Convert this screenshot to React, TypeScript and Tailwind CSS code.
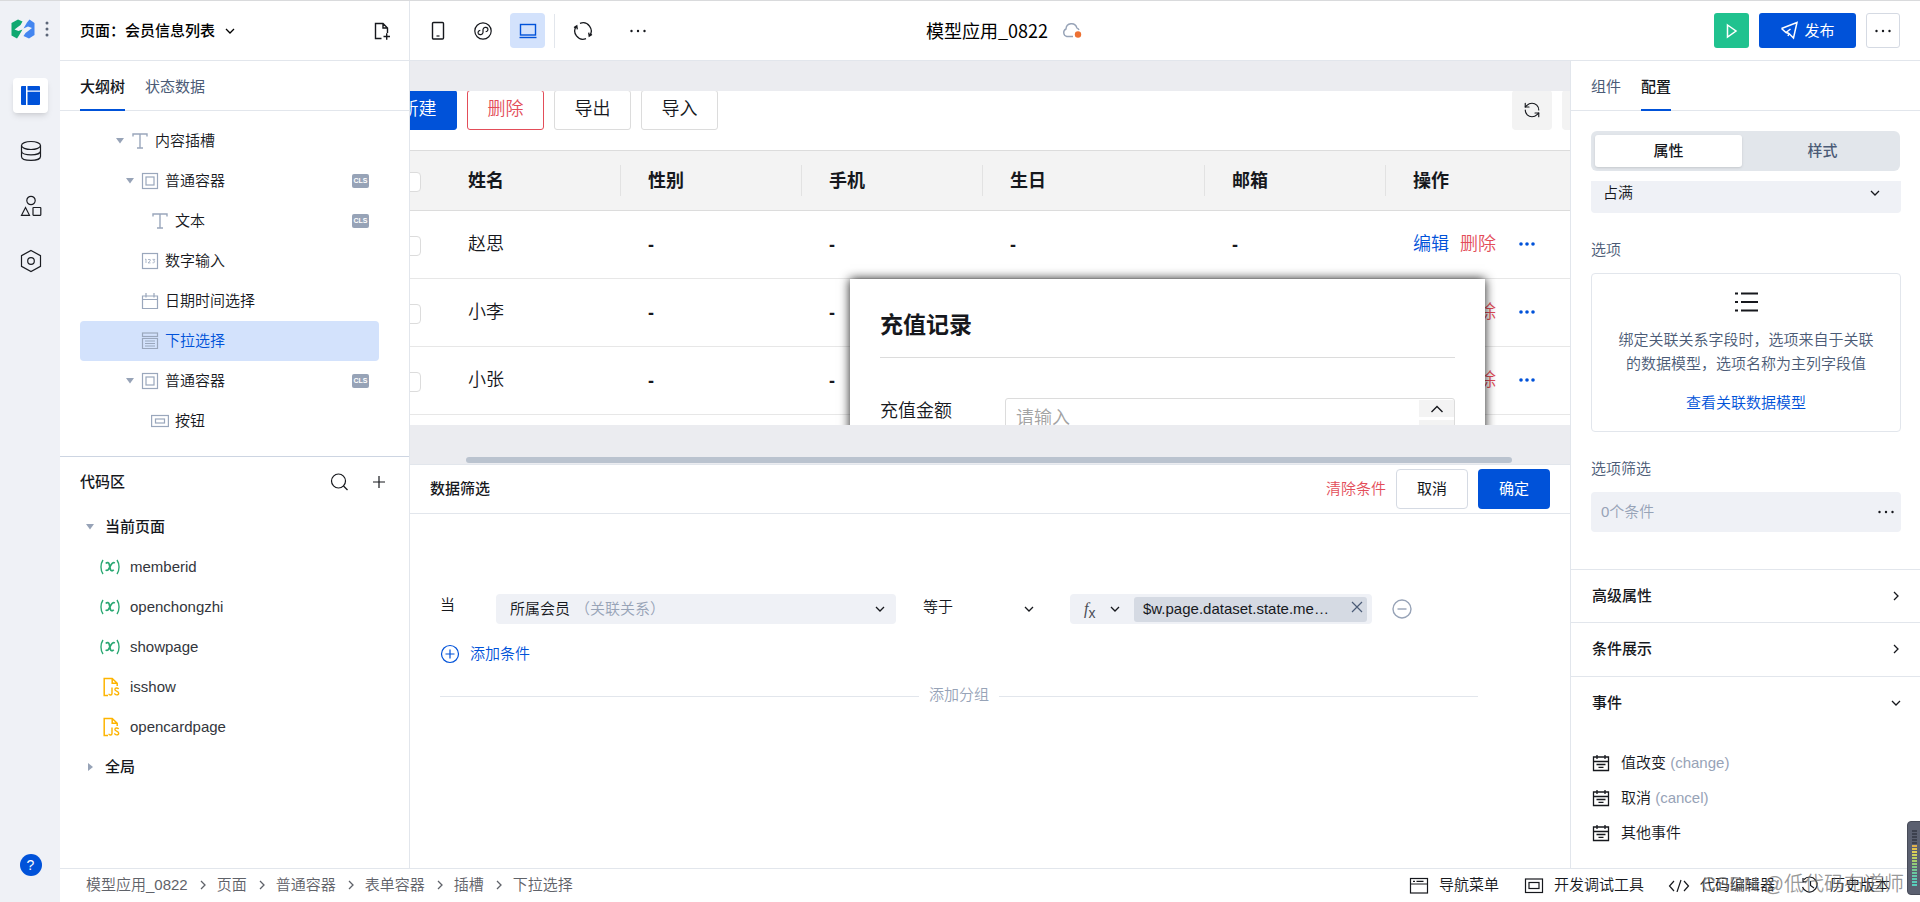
import { useState } from 'react';
import type { ReactNode } from 'react';
import { RefreshCcw } from 'lucide-react';
import clsx from 'clsx';

interface IconProps {
  className?: string;
}

interface SvgProps extends IconProps {
  w: number;
  h: number;
  children: ReactNode;
}

function Svg({ w, h, className, children }: SvgProps) {
  return (
    <svg
      width={w}
      height={h}
      viewBox={`0 0 ${w} ${h}`}
      fill="none"
      stroke="currentColor"
      strokeWidth={1.2}
      className={clsx('shrink-0', className)}
      aria-hidden="true"
    >
      {children}
    </svg>
  );
}

const ChevronDown = ({ className }: IconProps) => (
  <Svg w={10} h={10} className={className}>
    <path d="M1 3l4 4 4-4" strokeWidth={1.3} />
  </Svg>
);

const ChevronRight = ({ className }: IconProps) => (
  <Svg w={10} h={10} className={className}>
    <path d="M3 1l4 4-4 4" strokeWidth={1.3} />
  </Svg>
);

const Dots = ({ className }: IconProps) => (
  <Svg w={18} h={4} className={className}>
    <g fill="currentColor" stroke="none">
      <circle cx="2.5" cy="2" r="1.2" />
      <circle cx="9" cy="2" r="1.2" />
      <circle cx="15.5" cy="2" r="1.2" />
    </g>
  </Svg>
);

const Caret = ({ open = true }: { open?: boolean }) => (
  <Svg w={12} h={12} className="text-[#97a3b7]">
    <path d={open ? 'M2 3h8L6 8.5z' : 'M4 2v8l5-4z'} fill="currentColor" stroke="none" />
  </Svg>
);

const TextIcon = () => (
  <Svg w={18} h={18}>
    <path d="M2 4.5V2h14v2.5M9 2v14M6 16h6" strokeWidth={1.4} />
  </Svg>
);

const ContainerIcon = () => (
  <Svg w={18} h={18}>
    <rect x="1.5" y="1.5" width="15" height="15" />
    <rect x="5" y="5" width="8" height="8" />
  </Svg>
);

const NumberIcon = () => (
  <Svg w={18} h={18}>
    <rect x="1.5" y="1.5" width="15" height="15" />
    <path d="M4 7.5l1-.5v4M7 7.5h2.2V9L7 10.9h2.5M11.5 7.4h2.3L12.6 9c1.6 0 1.6 2-1.1 1.8" strokeWidth={0.8} />
  </Svg>
);

const CalendarIcon = () => (
  <Svg w={18} h={18}>
    <path d="M1.5 4h15v12.5h-15zM1.5 7.5h15M5 1v4.5M13 1v4.5" />
  </Svg>
);

const SelectIcon = () => (
  <Svg w={18} h={18}>
    <rect x="1.5" y="1" width="15" height="3.5" />
    <path d="M1.5 6.5h15v10h-15zM4 9h10M4 11.5h10M4 14h10" />
  </Svg>
);

const ButtonIcon = () => (
  <Svg w={18} h={18}>
    <rect x="0.6" y="3.5" width="16.8" height="11" />
    <rect x="4.5" y="7" width="9" height="4" />
  </Svg>
);

const EventIcon = () => (
  <Svg w={18} h={18}>
    <path d="M1.5 3h15v13.5h-15zM1.5 7.5h15M5 1v4M13 1v4M4.5 10.5h9M6.500 13.3h5" strokeWidth={1.3} />
  </Svg>
);

const JsFileIcon = () => (
  <Svg w={18} h={20} className="text-[#fdb400]">
    <path d="M6 18.5H2.2V1.5h8l5 4.7V9M10.2 1.5v4.7h5" strokeWidth={1.5} />
    <path d="M10 10.5v6c0 2-3 2-3 .2M16.500 12.2c-.2-1.7-3.6-1.6-3.6.2 0 2 3.8 1.3 3.8 3.8 0 2.2-3.9 2.2-4.1 0" strokeWidth={1.4} />
  </Svg>
);

const VarIcon = () => (
  <Svg w={20} h={16} className="text-[#2aa873]">
    <path d="M3 1C.3 5 .3 11 3 15M17 1c2.7 4 2.7 10 0 14" strokeWidth={1.4} />
    <path d="M5.800 4.500c1.400-1.700 3-1 3.400.8l1.200 5c.4 1.800 2 2 3.300.4M14.800 4c-1.700-1.200-3 .3-4.600 3.400s-2.400 4.700-4.600 3.700" strokeWidth={1.7} />
  </Svg>
);

interface TreeNode {
  label: string;
  icon: ReactNode;
  indent: string;
  caret?: boolean;
  cls?: boolean;
}

const treeNodes: TreeNode[] = [
  { label: '内容插槽', icon: <TextIcon />, indent: 'pl-[34px]', caret: true },
  { label: '普通容器', icon: <ContainerIcon />, indent: 'pl-[44px]', caret: true, cls: true },
  { label: '文本', icon: <TextIcon />, indent: 'pl-[54px]', cls: true },
  { label: '数字输入', icon: <NumberIcon />, indent: 'pl-[44px]' },
  { label: '日期时间选择', icon: <CalendarIcon />, indent: 'pl-[44px]' },
  { label: '下拉选择', icon: <SelectIcon />, indent: 'pl-[44px]' },
  { label: '普通容器', icon: <ContainerIcon />, indent: 'pl-[44px]', caret: true, cls: true },
  { label: '按钮', icon: <ButtonIcon />, indent: 'pl-[54px]' },
];

const codeItems = [
  { name: 'memberid', type: 'var' },
  { name: 'openchongzhi', type: 'var' },
  { name: 'showpage', type: 'var' },
  { name: 'isshow', type: 'js' },
  { name: 'opencardpage', type: 'js' },
];

const members = ['赵思', '小李', '小张', ''];
const crumbs = ['模型应用_0822', '页面', '普通容器', '表单容器', '插槽', '下拉选择'];
const events = [
  { label: '值改变', code: '(change)' },
  { label: '取消', code: '(cancel)' },
  { label: '其他事件', code: '' },
];

function Rail() {
  return (
    <nav className="flex w-[60px] shrink-0 flex-col items-center bg-[#eff1f6] pl-px text-[#1b1d22]">
      <div className="flex h-[60px] w-full items-center gap-[10px] pb-1 pl-[10px]">
        <svg width="24" height="20" viewBox="0 0 24 20" aria-hidden="true">
          <path d="M.5 4L7 .5 11.500 2.500 9.500 6 3.500 10.500 7.500 12l4-1.500L8 16.500 6 19.500.5 16.500z" fill="#0fa870" />
          <path d="M23.500 16L18 19.500 12.500 17l2-3 6.500-5-4-1.500-4.500 2L16 3.500l2.500-3 5 3.500z" fill="#4486f0" />
        </svg>
        <Svg w={4} h={16} className="text-[#5c6678]">
          <g fill="currentColor" stroke="none">
            <circle cx="2" cy="2" r="1.5" />
            <circle cx="2" cy="8" r="1.5" />
            <circle cx="2" cy="14" r="1.5" />
          </g>
        </Svg>
      </div>
      <button type="button" aria-label="页面" className="mt-[17px] flex size-[35px] items-center justify-center rounded bg-white shadow-md">
        <svg width="19" height="19" viewBox="0 0 19 19" fill="#0052d9" aria-hidden="true">
          <path d="M0 1a1 1 0 011-1h4v19H1a1 1 0 01-1-1zM6.500 0H18a1 1 0 011 1v3.500H6.500zM6.500 5.700H19V18a1 1 0 01-1 1H6.500z" />
        </svg>
      </button>
      <button type="button" aria-label="数据" className="mt-[27px]">
        <Svg w={22} h={22}>
          <ellipse cx="11" cy="5.500" rx="9.500" ry="4" />
          <path d="M1.500 5.500v11c0 5.200 19 5.200 19 0v-11M1.500 11c0 5.200 19 5.200 19 0" />
        </Svg>
      </button>
      <button type="button" aria-label="组件" className="mt-[33px]">
        <Svg w={22} h={22}>
          <circle cx="11" cy="5.500" r="4.200" />
          <path d="M5.500 12.500l4 7.800h-8z" />
          <rect x="13" y="12.500" width="7.800" height="7.800" rx="0.500" />
        </Svg>
      </button>
      <button type="button" aria-label="设置" className="mt-[32px]">
        <Svg w={22} h={24}>
          <path d="M11 1.500l9.500 5.200v10.600L11 22.500l-9.500-5.200V6.700z" />
          <circle cx="11" cy="12" r="3.300" />
        </Svg>
      </button>
      <button type="button" className="mt-auto mb-[26px] size-[22px] rounded-full bg-[#0052d9] text-sm leading-[22px] text-white">
        ?
      </button>
    </nav>
  );
}

function TopBar() {
  return (
    <header className="flex h-[60px] shrink-0 border-b border-[#e2e6ec]">
      <div className="flex flex-1">
        <div className="flex w-[350px] shrink-0 items-center border-r border-[#e2e6ec] pr-[18px] pl-5">
          <button type="button" className="flex items-center gap-[10px] font-medium text-black">
            页面：会员信息列表
            <ChevronDown />
          </button>
          <button type="button" aria-label="新建页面" className="ml-auto">
            <Svg w={18} h={20}>
              <path d="M8.500 17.500H2.500v-15h7.500l4.500 4.500v5M10 2.500V7h4.500M10.500 15.500h6.500M13.700 12.300v6.500" strokeWidth={1.400} />
            </Svg>
          </button>
        </div>
        <div className="flex items-center pl-[10px]">
          <button type="button" aria-label="手机" className="flex size-[35px] items-center justify-center">
            <Svg w={14} h={20}>
              <rect x="1.500" y="1.500" width="11" height="16.500" rx="1" strokeWidth={1.400} />
              <path d="M5.500 15h3" />
            </Svg>
          </button>
          <button type="button" aria-label="小程序" className="ml-[10px] flex size-[35px] items-center justify-center">
            <Svg w={20} h={20}>
              <circle cx="10" cy="10" r="8.200" />
              <path d="M7.300 9.300c-2 .3-2.600 2-2 3.300 1 1.800 4.500 1.300 4.700-1.100v-3c.2-2.400 3.700-2.900 4.700-1.100.6 1.300 0 3-2 3.300" />
            </Svg>
          </button>
          <button type="button" aria-label="电脑" className="ml-[10px] flex size-[35px] items-center justify-center rounded bg-[#d3e2fc] text-[#0052d9]">
            <Svg w={18} h={16}>
              <rect x="1.500" y="1.500" width="15" height="10.500" strokeWidth={1.400} />
              <path d="M0.500 14.500h17" strokeWidth={1.400} />
            </Svg>
          </button>
          <div className="ml-[9px] h-[34px] w-px bg-[#e2e6ec]" />
          <button type="button" aria-label="刷新" className="ml-[10px] flex size-[35px] items-center justify-center">
            <Svg w={20} h={20}>
              <path d="M7 2.400A8.200 8.200 0 0116.500 15M19 13.500l-2.800 1.700-.5-3.500" strokeWidth={1.300} />
              <path d="M13 17.600A8.200 8.200 0 013.500 5M1 6.500l2.800-1.700.5 3.500" strokeWidth={1.300} />
            </Svg>
          </button>
          <button type="button" aria-label="更多" className="ml-[20px] flex size-[35px] items-center justify-center">
            <Dots />
          </button>
        </div>
      </div>
      <h1 className="flex items-center gap-[14px] pb-[2px] pl-12 font-['Noto_Sans_CJK_SC',sans-serif] text-lg font-normal text-black">
        模型应用_0822
        <Svg w={20} h={18} className="text-[#97a3b7]">
          <path d="M11 15.500H4.800A4 4 0 014 8a5.500 5.500 0 0110.800-1.200c.8.300 1.700 1 2.200 2.200" strokeWidth={1.400} />
          <circle cx="16" cy="13.500" r="3.200" fill="#ed7133" stroke="none" />
        </Svg>
      </h1>
      <div className="flex flex-1 items-center justify-end gap-[10px] pr-5">
        <button type="button" aria-label="预览" className="flex size-[35px] items-center justify-center rounded-[3px] bg-[#20c28f] text-white">
          <Svg w={12} h={16}>
            <path d="M1.500 2l8.500 6-8.500 6z" strokeWidth={1.500} />
          </Svg>
        </button>
        <button type="button" className="flex h-[35px] w-[97px] items-center justify-center gap-[5px] rounded-[3px] bg-[#0052d9] font-normal text-white">
          <Svg w={19} h={19}>
            <path d="M1.500 7.500L17 1.500 13.500 17 9 12.500 8 15M1.500 7.500L6 11.500l3 1M6 11.500L10.500 8" strokeWidth={1.500} />
          </Svg>
          发布
        </button>
        <button type="button" aria-label="更多操作" className="flex h-[35px] w-[34px] items-center justify-center rounded-[3px] border border-[#d5dae3]">
          <Dots />
        </button>
      </div>
    </header>
  );
}

function Sidebar() {
  const [selected, setSelected] = useState(5);

  return (
    <aside className="flex w-[350px] shrink-0 flex-col border-r border-[#e2e6ec]">
      <div className="flex h-[50px] shrink-0 gap-5 border-b border-[#e2e6ec] pl-5 font-normal">
        <button type="button" className="relative pt-[2px] font-medium after:absolute after:inset-x-0 after:-bottom-px after:h-[2px] after:bg-[#0052d9]">
          大纲树
        </button>
        <button type="button" className="pt-[2px] text-[#4b5b76]">状态数据</button>
      </div>

      <div className="shrink-0 border-b border-[#cdd5e2] pt-[10px] pr-[30px] pb-[15px] pl-5">
        {treeNodes.map((node, i) => (
          <button
            type="button"
            key={i}
            onClick={() => setSelected(i)}
            className={clsx(
              'flex h-10 w-full items-center rounded pr-[10px]',
              node.indent,
              selected === i && 'bg-[#d3e2fc] text-[#0052d9]'
            )}
          >
            <span className="flex w-[12px] shrink-0">{node.caret && <Caret />}</span>
            <span className="mr-[6px] ml-[5px] text-[#9aa7bc]">{node.icon}</span>
            {node.label}
            {node.cls && (
              <span className="ml-auto h-[14px] w-[17px] rounded-[2px] bg-[#97a3b7] text-center text-[7px] leading-[14px] font-bold text-white">
                CLS
              </span>
            )}
          </button>
        ))}
      </div>

      <div className="flex h-[50px] shrink-0 items-center pr-[23px] pl-5">
        <h2 className="font-medium">代码区</h2>
        <button type="button" aria-label="搜索" className="mr-6 ml-auto">
          <Svg w={18} h={18}>
            <circle cx="8.500" cy="8" r="7" />
            <path d="M13.500 13l4 4" />
          </Svg>
        </button>
        <button type="button" aria-label="添加">
          <Svg w={14} h={14}>
            <path d="M7 1v12M1 7h12" />
          </Svg>
        </button>
      </div>
      <button type="button" className="flex h-10 shrink-0 items-center gap-[9px] pl-[24px] font-medium">
        <Caret />
        当前页面
      </button>
      {codeItems.map(item => (
        <button type="button" key={item.name} className="flex h-10 shrink-0 items-center pl-10 text-[#33363c]">
          <span className="mr-[10px] flex w-5 justify-end">{item.type === 'js' ? <JsFileIcon /> : <VarIcon />}</span>
          {item.name}
        </button>
      ))}
      <button type="button" className="flex h-10 shrink-0 items-center gap-[9px] pl-[24px] font-medium">
        <Caret open={false} />
        全局
      </button>
    </aside>
  );
}

function MemberTable() {
  const headCell = 'border-y border-[#dcdcdc] bg-[#f3f3f3] p-0 text-left font-bold';
  const cell = 'border-b border-[#e7e7e7] p-0 pb-[2px] pl-7';
  const dashCell = 'border-b border-[#e7e7e7] p-0 pl-7 font-bold';
  const box = 'mt-[3px] ml-[21px] block size-5 appearance-none rounded border border-[#dcdcdc] bg-white';

  return (
    <table className="-ml-[30px] w-[calc(100%+60px)] table-fixed border-separate border-spacing-0">
      <colgroup>
        <col className="w-[60px]" />
        <col className="w-[180px]" />
        <col className="w-[181px]" />
        <col className="w-[181px]" />
        <col className="w-[222px]" />
        <col className="w-[181px]" />
        <col />
      </colgroup>
      <thead>
        <tr className="h-[61px]">
          <th className={headCell}>
            <input type="checkbox" aria-label="全选" className={box} />
          </th>
          {['姓名', '性别', '手机', '生日', '邮箱', '操作'].map((name, i) => (
            <th key={name} className={headCell}>
              <div className={clsx('flex h-[31px] items-center', i === 0 ? 'pl-7' : 'border-l border-[#e2e2e2] pl-[27px]')}>{name}</div>
            </th>
          ))}
        </tr>
      </thead>
      <tbody>
        {members.map((name, i) => (
          <tr key={i} className="h-[68px]">
            <td className="border-b border-[#e7e7e7] p-0">
              {name && <input type="checkbox" aria-label={name} className={box} />}
            </td>
            <td className={cell}>{name}</td>
            <td className={dashCell}>{name && '-'}</td>
            <td className={dashCell}>{name && '-'}</td>
            <td className={dashCell}>{name && '-'}</td>
            <td className={dashCell}>{name && '-'}</td>
            <td className={cell}>
              {name && (
                <div className="flex items-center">
                  <a href="#edit" className="text-[#0052d9]">编辑</a>
                  <a href="#delete" className="ml-[11px] text-[#e34d59]">删除</a>
                  <button type="button" aria-label="更多" className="ml-[22px] text-[#0052d9]">
                    <Svg w={18} h={6}>
                      <g fill="currentColor" stroke="none">
                        <circle cx="3" cy="3" r="1.800" />
                        <circle cx="9" cy="3" r="1.800" />
                        <circle cx="15" cy="3" r="1.800" />
                      </g>
                    </Svg>
                  </button>
                </div>
              )}
            </td>
          </tr>
        ))}
      </tbody>
    </table>
  );
}

function Canvas() {
  const toolButton = 'h-10 w-[77px] shrink-0 rounded-[3px] border pb-[2px]';

  return (
    <section className="flex min-h-0 flex-1 flex-col border-b border-[#e2e6ec] bg-[#ebecf0] pt-[30px]">
      <div className="relative min-h-0 flex-1 overflow-hidden bg-white text-lg leading-6">
        <div className="-mt-px mb-5 -ml-[30px] flex gap-[10px]">
          <button type="button" className={clsx(toolButton, 'border-[#0052d9] bg-[#0052d9] text-white')}>新建</button>
          <button type="button" className={clsx(toolButton, 'border-[#e34d59] text-[#e34d59]')}>删除</button>
          <button type="button" className={clsx(toolButton, 'border-[#dcdcdc]')}>导出</button>
          <button type="button" className={clsx(toolButton, 'border-[#dcdcdc]')}>导入</button>
          <button type="button" aria-label="刷新" className="ml-auto flex size-10 shrink-0 items-center justify-center rounded bg-[#f3f3f3]">
            <RefreshCcw size={18} strokeWidth={1.5} />
          </button>
          <button type="button" aria-label="设置" className="-mr-8 size-10 shrink-0 rounded bg-[#f3f3f3]" />
        </div>
        <MemberTable />

        {/* 充值记录弹窗 */}
        <div role="dialog" aria-label="充值记录" className="absolute top-[188px] right-[85px] -bottom-5 left-[440px] bg-white px-[30px] pt-[30px] shadow-[0_0_10px_rgba(0,0,0,0.9)]">
          <h3 className="border-b border-[#dcdcdc] pb-4 text-[23px] leading-8 font-bold">充值记录</h3>
          <div className="mt-10 flex items-start">
            <label htmlFor="amount" className="w-[125px] shrink-0 leading-[26px]">充值金额</label>
            <div className="relative flex-1">
              <input
                id="amount"
                placeholder="请输入"
                className="h-10 w-full rounded-[3px] border border-[#dcdcdc] px-[10px] placeholder:text-[#a3a3a3]"
              />
              <div className="absolute top-[2px] right-px flex flex-col gap-[3px]">
                <button type="button" aria-label="增加" className="flex h-[17px] w-[35px] items-center justify-center bg-[#f3f3f3]">
                  <Svg w={14} h={8}>
                    <path d="M1.500 7L7 1.500 12.500 7" strokeWidth={1.400} />
                  </Svg>
                </button>
                <button type="button" aria-label="减少" className="h-[17px] w-[35px] bg-[#f3f3f3]" />
              </div>
            </div>
          </div>
        </div>
      </div>
      <div className="flex h-[39px] shrink-0 items-end pr-[58px] pb-px pl-14">
        <div className="h-[6px] w-full rounded-full bg-[#bac3cf]" />
      </div>
    </section>
  );
}

function FilterPanel() {
  return (
    <section className="h-[403px] shrink-0">
      <div className="flex h-[49px] items-center border-b border-[#e2e6ec] px-5">
        <h2 className="font-medium">数据筛选</h2>
        <button type="button" className="mr-[10px] ml-auto text-[#e34d59]">清除条件</button>
        <button type="button" className="mr-[10px] h-10 w-[72px] rounded border border-[#d5dae3] font-normal">取消</button>
        <button type="button" className="h-10 w-[72px] rounded bg-[#0052d9] font-normal text-white">确定</button>
      </div>

      <div className="pt-20 pr-[92px] pl-[30px]">
        <div className="flex items-center">
          <span className="w-14 pb-2">当</span>
          <div className="relative">
            <select aria-label="字段" className="h-[30px] w-[400px] appearance-none rounded bg-[#eff1f6] pl-[14px]">
              <option>所属会员</option>
            </select>
            <span className="pointer-events-none absolute top-0 left-[79px] leading-[30px] text-[#97a3b7]">（关联关系）</span>
            <ChevronDown className="pointer-events-none absolute top-[10px] right-[11px]" />
          </div>
          <div className="relative ml-[27px]">
            <select aria-label="条件" className="h-[30px] w-[112px] appearance-none pb-1">
              <option>等于</option>
            </select>
            <ChevronDown className="pointer-events-none absolute top-[10px] right-px" />
          </div>
          <div className="ml-[35px] flex h-[30px] w-[302px] shrink-0 items-center rounded bg-[#eff1f6] pl-[14px]">
            <button type="button" aria-label="表达式" className="flex items-center gap-[10px]">
              <span className="flex w-4 items-baseline font-['Liberation_Serif',serif] text-base leading-5 text-[#4a4d55] italic">
                f<sub className="font-['Liberation_Sans',sans-serif] text-sm leading-5 not-italic">x</sub>
              </span>
              <ChevronDown />
            </button>
            <div className="ml-[14px] flex h-[25px] w-[233px] items-center rounded-[3px] bg-[#d5dae3] pl-[9px]">
              <span className="truncate">$w.page.dataset.state.me…</span>
              <button type="button" aria-label="清除" className="mr-[4px] ml-auto pb-1">
                <Svg w={12} h={12} className="text-[#4b5b76]">
                  <path d="M1 1l10 10M11 1L1 11" />
                </Svg>
              </button>
            </div>
          </div>
          <button type="button" aria-label="删除条件" className="ml-[20px] shrink-0">
            <Svg w={20} h={20} className="text-[#97a3b7]">
              <circle cx="10" cy="10" r="9" strokeWidth={1.400} />
              <path d="M5.500 10h9" strokeWidth={1.400} />
            </Svg>
          </button>
        </div>
        <button type="button" className="mt-[18px] flex h-6 items-center gap-[10px] text-[#0052d9]">
          <Svg w={20} h={20}>
            <circle cx="10" cy="10" r="8.500" />
            <path d="M10 5.500v9M5.500 10h9" />
          </Svg>
          添加条件
        </button>
        <div className="mt-[18px] flex h-6 items-center gap-[10px]">
          <div className="h-px flex-1 bg-[#e2e6ec]" />
          <button type="button" className="pb-[2px] text-[#97a3b7]">添加分组</button>
          <div className="h-px flex-1 bg-[#e2e6ec]" />
        </div>
      </div>
    </section>
  );
}

function ConfigPanel() {
  return (
    <aside className="flex w-[350px] shrink-0 flex-col border-l border-[#e2e6ec]">
      <div className="flex h-[50px] shrink-0 gap-5 border-b border-[#e2e6ec] pl-5 font-normal">
        <button type="button" className="pt-[2px] text-[#4b5b76]">组件</button>
        <button type="button" className="relative pt-[2px] font-medium after:absolute after:inset-x-0 after:-bottom-px after:h-[2px] after:bg-[#0052d9]">
          配置
        </button>
      </div>

      <div className="px-5 py-[10px] pt-5">
        <div className="flex h-10 gap-1 rounded-md bg-[#e2e6eb] p-1 font-medium">
          <button type="button" className="w-[147px] rounded-[3px] bg-white shadow-sm">属性</button>
          <button type="button" className="flex-1 pl-[3px] text-[#4b5b76]">样式</button>
        </div>
      </div>

      <div className="min-h-0 flex-1 overflow-hidden">
        <div className="-mt-2 px-[20px] pr-[19px]">
          <div className="relative">
            <select aria-label="宽度" className="h-10 w-full appearance-none rounded bg-[#eff1f6] pl-3">
              <option>占满</option>
            </select>
            <ChevronDown className="pointer-events-none absolute top-[15px] right-[21px]" />
          </div>

          <h3 className="mt-[25px] leading-6 text-[#4b5b76]">选项</h3>
          <div className="mt-[11px] flex h-[159px] flex-col items-center rounded border border-[#e2e6ec] pt-[17px] text-center leading-6 text-[#4b5b76]">
            <Svg w={24} h={22} className="text-[#16181d]">
              <path d="M1 2.500h3M7 2.500h17M1 11h3M7 11h17M1 19.500h3M7 19.500h17" strokeWidth={1.800} />
            </Svg>
            <p className="mt-[15px] w-[262px]">绑定关联关系字段时，选项来自于关联的数据模型，选项名称为主列字段值</p>
            <a href="#model" className="mt-[15px] text-[#0052d9]">查看关联数据模型</a>
          </div>

          <h3 className="mt-[25px] leading-6 text-[#4b5b76]">选项筛选</h3>
          <button type="button" className="mt-[11px] flex h-10 w-full items-center rounded bg-[#eff1f6] pr-[6px] pl-[10px] text-[#97a3b7]">
            0个条件
            <Dots className="ml-auto text-[#16181d]" />
          </button>
        </div>

        <div className="mt-[37px] border-t border-[#e2e6ec]">
          <button type="button" className="flex h-[53px] w-full items-center justify-between border-b border-[#e2e6ec] pr-[19px] pb-px pl-[21px] font-medium">
            高级属性
            <ChevronRight />
          </button>
          <button type="button" className="flex h-[54px] w-full items-center justify-between border-b border-[#e2e6ec] pr-[19px] pb-[2px] pl-[21px] font-medium">
            条件展示
            <ChevronRight />
          </button>
          <button type="button" className="flex h-[53px] w-full items-center justify-between pr-[19px] pb-[2px] pl-[21px] font-medium">
            事件
            <ChevronDown />
          </button>
        </div>
        <ul className="mt-[15px]">
          {events.map(ev => (
            <li key={ev.label} className="flex h-[35px] items-center pl-[21px]">
              <EventIcon />
              <span className="ml-[11px]">
                {ev.label} <span className="text-[#97a3b7]">{ev.code}</span>
              </span>
            </li>
          ))}
        </ul>
      </div>
    </aside>
  );
}

function StatusBar() {
  return (
    <footer className="flex h-[34px] shrink-0 items-center border-t border-[#e2e6ec] pr-[30px] pb-[2px] pl-[26px]">
      <nav className="flex items-center text-[#5f6269]">
        {crumbs.map((crumb, i) => (
          <span key={crumb} className="flex items-center">
            {i > 0 && <ChevronRight className="mr-[9px] ml-[10px]" />}
            <a href="#crumb">{crumb}</a>
          </span>
        ))}
      </nav>
      <div className="ml-auto flex items-center">
        <button type="button" className="flex items-center gap-[10px]">
          <Svg w={20} h={18}>
            <rect x="1.500" y="2.500" width="17" height="14.500" />
            <path d="M1.500 8h17M4 5.300h2M7.500 5.300h7" />
          </Svg>
          导航菜单
        </button>
        <button type="button" className="ml-[25px] flex items-center gap-[10px]">
          <Svg w={20} h={18}>
            <rect x="1.500" y="3" width="17" height="13.500" />
            <rect x="5" y="6.500" width="10" height="6" />
          </Svg>
          开发调试工具
        </button>
        <button type="button" className="ml-[24px] flex items-center gap-[10px]">
          <Svg w={22} h={14}>
            <path d="M6 3L1.500 8 6 13M16 3l4.500 5-4.500 5M13 2L9 14" />
          </Svg>
          代码编辑器
        </button>
        <button type="button" className="ml-[25px] flex items-center gap-[10px]">
          <Svg w={20} h={18}>
            <path d="M4 3.500a7.500 7.500 0 11-1.500 7.500M3 2v4l3.500-.5M10.500 5v4.500l3.500 2.500" />
          </Svg>
          历史版本
        </button>
      </div>
    </footer>
  );
}

/* 悬浮音量条 */
function LevelMeter() {
  const colors = [
    '#3d414e', '#3d414e', '#3d414e', '#3d414e', '#3d414e', '#e0b04c', '#e3c24f', '#dfcf55', '#cfd25c', '#bcd163',
    '#a8cf6c', '#93cc78', '#82ca85', '#74c993', '#6ac99f', '#63c9a9', '#5ecbb1', '#5accb7', '#57cebc',
  ];
  return (
    <svg width="13" height="74" viewBox="0 0 13 74" className="absolute right-0 bottom-[7px]" aria-hidden="true">
      <path d="M4 .5h10v73H4a3.500 3.500 0 01-3.500-3.500V4A3.500 3.500 0 014 .5z" fill="#5b6070" stroke="#474b58" />
      {colors.map((color, i) => (
        <rect key={i} x="5" y={9 + i * 3} width="5" height="2" fill={color} />
      ))}
    </svg>
  );
}

export default function App() {
  return (
    <div className="relative flex h-screen overflow-hidden border-t border-[#d9dadc] bg-white font-['Liberation_Sans','Noto_Sans_CJK_SC',sans-serif] text-[15px] leading-5 font-[350] text-[#16181d]">
      <Rail />
      <div className="flex min-w-0 flex-1 flex-col">
        <TopBar />
        <div className="flex min-h-0 flex-1">
          <Sidebar />
          <main className="flex min-w-0 flex-1 flex-col">
            <Canvas />
            <FilterPanel />
          </main>
          <ConfigPanel />
        </div>
        <StatusBar />
      </div>
      <div className="pointer-events-none absolute right-4 bottom-1 text-xl leading-7 text-[#6b6b6b]/70">CSDN @低代码布道师</div>
      <LevelMeter />
    </div>
  );
}
